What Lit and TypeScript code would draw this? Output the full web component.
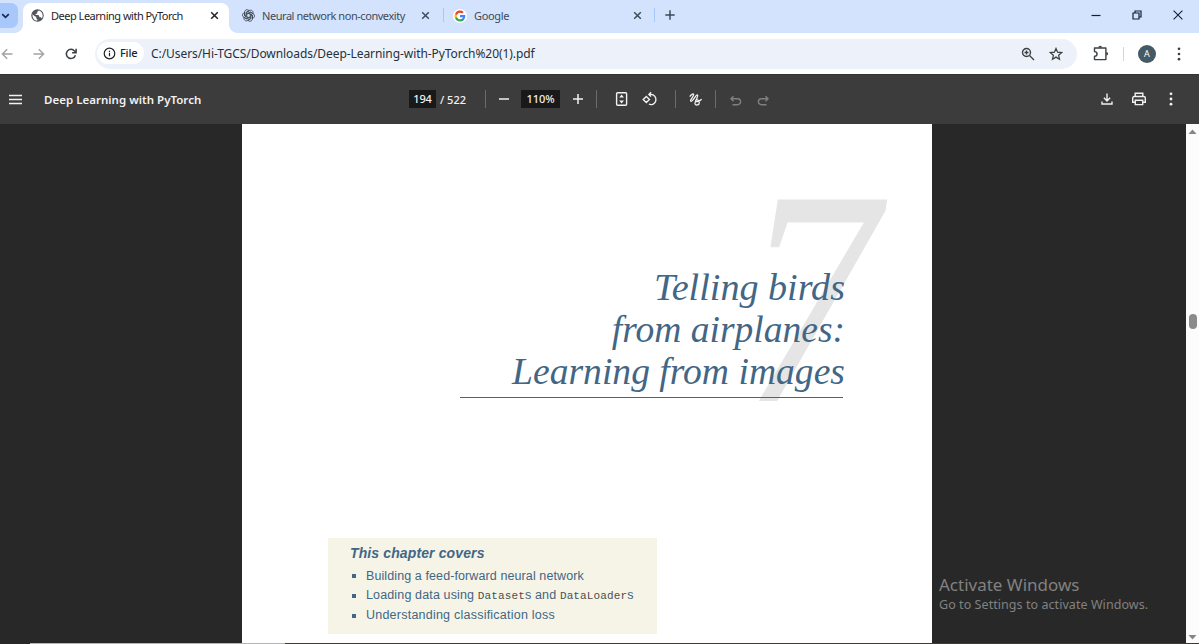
import { LitElement, html, css, svg } from "lit";
import { customElement } from "lit/decorators.js";

const icon = (name: string, size: number, body: unknown, box = 24) =>
  html`<svg class="icon ${name}" width=${size} height=${size} viewBox="0 0 ${box} ${box}">${body}</svg>`;

const close = () => icon("line", 9, svg`<path d="M1.2 1.2l6.6 6.6M7.8 1.2l-6.6 6.6" stroke-width="1.5"/>`, 9);
const dots = (r: number) =>
  icon("solid", 16, svg`<circle cx="8" cy="2.8" r=${r}/><circle cx="8" cy="8" r=${r}/><circle cx="8" cy="13.2" r=${r}/>`, 16);

@customElement("tab-strip")
class TabStrip extends LitElement {
  static styles = css`
    :host { display: flex; height: 33px; background: #d3e3fd; color: #414a58; font: 11px/16px "Noto Sans", sans-serif; }
    .icon { display: block; flex: none; }
    .line { fill: none; stroke: currentColor; }
    .search { width: 18px; height: 25px; margin: 3px 5px 0 0; border-radius: 0 7px 7px 0; background: #a8c7fa; color: #172a4a; display: flex; align-items: center; box-sizing: border-box; }
    .tab { display: flex; flex: none; align-items: center; box-sizing: border-box; height: 25px; margin-top: 3px; white-space: nowrap; }
    .active { width: 206px; height: 30px; padding: 0 10px 5px 8px; background: #fff; border-radius: 8px 8px 0 0; color: #1f2328; position: relative; }
    .active::before, .active::after { content: ""; position: absolute; bottom: 0; width: 8px; height: 8px; }
    .active::before { left: -8px; background: radial-gradient(circle at 0 0, transparent 7.5px, #fff 8px); }
    .active::after { right: -8px; background: radial-gradient(circle at 100% 0, transparent 7.5px, #fff 8px); }
    .name { flex: 1; margin-left: 7px; }
    .t1 { letter-spacing: -0.49px; }
    .t2 { letter-spacing: -0.45px; }
    .t3 { letter-spacing: -0.35px; }
    .second { width: 201px; padding-left: 13px; }
    .third { width: 198px; padding-left: 9px; }
    .disc { width: 14px; height: 14px; border-radius: 50%; background: #fff; display: grid; place-items: center; }
    .bar { flex: none; width: 1px; height: 14px; margin-top: 8px; background: #a8c7fa; }
    .after-second { margin-left: 13px; }
    .after-third { margin-left: 12px; }
    .new { margin: 10px auto 0 10px; }
    .win { display: flex; align-items: center; color: #10203c; height: 30px; margin-right: 16px; gap: 31px; }
  `;
  render() {
    return html`
      <div class="search">${icon("line", 12, svg`<path d="M2.2 4.2L5.5 7.4 8.8 4.2" stroke-width="1.7"/>`, 12)}</div>
      <div class="tab active">
        ${icon("globe", 13, svg`<circle cx="6.5" cy="6.5" r="6.2" fill="#50555b"/><path d="M1.5 5.2L3.7 7.2 5.2 7.7V9.2L6.3 10.3V11.7C3.3 11.6 1.3 9.2 1.5 5.2ZM7.8 1.5L6.1 2.9 6.3 4.5 4.3 4.9 4.9 6.1H7.4L8.7 8.2H10L11 9.4C12.6 6.7 11.5 2.6 7.8 1.5Z" fill="#fff"/>`, 13)}
        <span class="name t1">Deep Learning with PyTorch</span>
        ${close()}
      </div>
      <div class="tab second">
        ${icon("line", 13, svg`${[0, 60, 120, 180, 240, 300].map(
          (a) => svg`<path d="M8.9 12.3V5.5L13.5 2.8C18 .4 22 5 19.9 9.2M8.9 8.9L14.9 5.4L20.6 8.8" transform="rotate(${a} 12 12)" stroke-width="1.65"/>`
        )}`)}
        <span class="name t2">Neural network non-convexity</span>
        ${close()}
      </div>
      <div class="bar after-second"></div>
      <div class="tab third">
        <span class="disc">${icon("g", 12, svg`
          <path fill="#4285F4" d="M22.6 12.2c0-.8-.1-1.5-.2-2.2H12v4.3h5.9a5 5 0 0 1-2.2 3.3v2.8h3.6c2.1-1.9 3.3-4.8 3.3-8.2z"/>
          <path fill="#34A853" d="M12 23c3 0 5.5-1 7.3-2.6l-3.6-2.8a6.6 6.6 0 0 1-9.9-3.5H2.2v2.8A11 11 0 0 0 12 23z"/>
          <path fill="#FBBC05" d="M5.8 14.1a6.6 6.6 0 0 1 0-4.2V7.1H2.2a11 11 0 0 0 0 9.8z"/>
          <path fill="#EA4335" d="M12 5.4c1.6 0 3.1.6 4.2 1.6l3.2-3.1A11 11 0 0 0 2.2 7.1l3.6 2.8A6.6 6.6 0 0 1 12 5.4z"/>`)}</span>
        <span class="name t3">Google</span>
        ${close()}
      </div>
      <div class="bar after-third"></div>
      <div class="new">${icon("line", 10, svg`<path d="M5 .3V9.7M.3 5H9.7" stroke-width="1.5"/>`, 10)}</div>
      <div class="win">
        ${icon("line", 10, svg`<path d="M.5 5.5H9.5" stroke-width="1.2"/>`, 10)}
        ${icon("line", 10, svg`<path d="M1 3H7V9H1ZM3 3V1H9V7H7" stroke-width="1.2"/>`, 10)}
        ${icon("line", 10, svg`<path d="M.6 .6L9.4 9.4M9.4 .6L.6 9.4" stroke-width="1.1"/>`, 10)}
      </div>
    `;
  }
}

@customElement("address-bar")
class AddressBar extends LitElement {
  static styles = css`
    :host { display: flex; align-items: center; height: 41px; box-sizing: border-box; background: #fff; color: #3c4043; font: 12px/18px "Noto Sans", sans-serif; }
    .icon { display: block; flex: none; }
    .line { fill: none; stroke: currentColor; }
    .solid { fill: currentColor; }
    .nav { display: flex; flex: none; gap: 20px; width: 95px; box-sizing: border-box; padding-left: 1px; color: #a0a3a7; }
    .reload { color: #3c4043; }
    .pill { flex: 0 0 982px; height: 30px; border-radius: 15px; background: #edf2fa; display: flex; align-items: center; }
    .chip { width: 47px; height: 22px; margin: -1px 0 0 2px; padding-left: 6px; box-sizing: border-box; background: #fff; border-radius: 11px; display: flex; align-items: center; gap: 4px; font-size: 11px; font-weight: 500; letter-spacing: -0.2px; color: #202124; }
    .url { flex: 1; margin-left: 7px; color: #27303a; letter-spacing: -0.07px; white-space: nowrap; }
    .zoom { margin-right: 14px; }
    .star { margin-right: 14px; }
    .ext { margin-left: 16px; }
    .bar { width: 1px; height: 14px; margin: 0 14px 0 13px; background: #c3d7f8; }
    .avatar { width: 18px; height: 18px; border-radius: 50%; background: #455a64; color: #fff; font-size: 9px; text-align: center; margin-right: 15px; }
  `;
  render() {
    const back = svg`<path d="M11.5 6H1.5M6.2 1.2L1.4 6l4.8 4.8" stroke-width="1.4"/>`;
    return html`
      <div class="nav">
        ${icon("line", 12, back, 12)}
        ${icon("line", 12, svg`<g transform="rotate(180 6 6)">${back}</g>`, 12)}
        <span class="reload">${icon("line", 12, svg`<path d="M10.4 7.2A4.6 4.6 0 1 1 9.6 3.1L11 4.5M11.1 .7V4.7H7.1" stroke-width="1.5"/>`, 12)}</span>
      </div>
      <div class="pill">
        <div class="chip">
          ${icon("line", 13, svg`<circle cx="6.5" cy="6.5" r="5.3" stroke-width="1.2"/><path d="M6.5 5.8V9.3M6.5 3.7V4.9" stroke-width="1.2"/>`, 13)}
          <span>File</span>
        </div>
        <span class="url">C:/Users/Hi-TGCS/Downloads/Deep-Learning-with-PyTorch%20(1).pdf</span>
        <span class="zoom">${icon("line", 14, svg`<circle cx="5.5" cy="5.5" r="4" stroke-width="1.4"/><path d="M8.5 8.5L13 13M3.5 5.5H7.5M5.5 3.5V7.5" stroke-width="1.4"/>`, 14)}</span>
        <span class="star">${icon("line", 14, svg`<path d="M7 1.5L8.6 5.2 12.6 5.6 9.6 8.3 10.5 12.2 7 10.1 3.5 12.2 4.4 8.3 1.4 5.6 5.4 5.2Z" stroke-width="1.25"/>`, 14)}</span>
      </div>
      <span class="ext">${icon("line", 17, svg`<path d="M1.5 3H12.9V14.6H1.5V11.2C4.9 11 4.9 6.8 1.5 6.6Z" stroke-width="1.4" stroke-linejoin="round"/><path d="M5.4 2.6A1.8 1.8 0 0 1 9 2.6ZM13.3 7A1.8 1.8 0 0 1 13.3 10.6Z" fill="currentColor" stroke="none"/>`, 17)}</span>
      <div class="bar"></div>
      <div class="avatar">A</div>
      ${dots(1.35)}
    `;
  }
}

@customElement("pdf-toolbar")
class PdfToolbar extends LitElement {
  static styles = css`
    :host { display: grid; grid-template-columns: 409px 1fr 98px; align-items: center; height: 50px; background: #3c3c3c; color: #f1f1f1; font: 600 11.5px/18px "Noto Sans", sans-serif; box-shadow: inset 0 1px #333; }
    .icon { display: block; flex: none; }
    .line { fill: none; stroke: currentColor; }
    .solid { fill: currentColor; }
    .left, .mid, .right { display: flex; align-items: center; }
    .left { padding-left: 9px; gap: 22px; }
    .title { letter-spacing: 0.02px; padding-top: 2px; }
    .field { height: 18px; background: #191919; text-align: center; font-weight: 500; font-size: 11px; letter-spacing: -0.1px; }
    .page { width: 27px; }
    .total { width: 49px; font-weight: 500; font-size: 11px; padding: 1px 0 0 4px; box-sizing: border-box; white-space: nowrap; }
    .zoom { width: 39px; }
    .minus { margin: 0 12px 0 13px; }
    .plus { margin: 0 13px; }
    .sep { width: 1px; height: 18px; background: #6b6b6b; }
    .fit { margin: 0 13px 0 18px; }
    .after-rotate { margin: 0 13px 0 17px; }
    .after-pen { margin: 0 13px; }
    .off { color: #808080; padding-top: 2px; }
    .redo { margin-left: 15px; }
    .print { margin-left: 2px; }
    .right { gap: 16px; }
  `;
  render() {
    const undo = svg`<path d="M4.5 2.2L2 4.7L4.5 7.2M2.2 4.7H8.6A2.8 2.8 0 0 1 8.6 10.7H3.5" stroke-width="1.4"/>`;
    return html`
      <div class="left">
        ${icon("line", 13, svg`<path d="M0 2.5H13M0 6.5H13M0 10.5H13" stroke-width="1.4"/>`, 13)}
        <span class="title">Deep Learning with PyTorch</span>
      </div>
      <div class="mid">
        <div class="field page">194</div>
        <div class="total">/ 522</div>
        <div class="sep"></div>
        <span class="minus">${icon("line", 10, svg`<path d="M0 5H10" stroke-width="1.5"/>`, 10)}</span>
        <div class="field zoom">110%</div>
        <span class="plus">${icon("line", 10, svg`<path d="M0 5H10M5 0V10" stroke-width="1.5"/>`, 10)}</span>
        <div class="sep"></div>
        <span class="fit">${icon("line", 14, svg`<rect x="1.6" y=".7" width="10" height="12.6" rx="1" stroke-width="1.4"/><path d="M6.6 2.6L9 5.4H4.2ZM6.6 11.4L9 8.6H4.2Z" fill="currentColor" stroke="none"/>`, 14)}</span>
        ${icon("line", 16, svg`<path d="M4.3 5.4L7.4 8.5L4.3 11.6L1.2 8.5ZM9.1 1.2L6.9 3.4L9.1 5.6M7.2 3.4H9A5.1 5.1 0 1 1 6.9 13.2" stroke-width="1.4"/>`, 16)}
        <div class="sep after-rotate"></div>
        ${icon("line", 13, svg`<path d="M.8 3.6C2 1.6 4.2 .3 4.6 1.4C5.2 3 .4 7.2 1.9 8.2C3.6 9.2 6.9 1.2 8.5 2C10 3 5.2 8.6 6.1 11C6.8 12.6 10.3 12.2 10.3 9.4C10.3 6.6 6.6 6.2 6.6 8C6.7 9.6 10.5 8.2 12.6 6.2" stroke-width="1.3"/>`, 13)}
        <div class="sep after-pen"></div>
        <span class="off">${icon("line", 13, undo, 13)}</span>
        <span class="off redo">${icon("line", 13, svg`<g transform="matrix(-1 0 0 1 13 0)">${undo}</g>`, 13)}</span>
      </div>
      <div class="right">
        ${icon("line", 12, svg`<path d="M6 .5V7.6M2.9 4.8L6 7.9L9.1 4.8M1 8.6V11H11V8.6" stroke-width="1.4"/>`, 12)}
        <span class="print">${icon("line", 16, svg`<path d="M4.2 5.2V2.3H11.8V5.2M4 11.3H1.7V7.1A1.6 1.6 0 0 1 3.3 5.5H12.7A1.6 1.6 0 0 1 14.3 7.1V11.3H12M4.3 9.3H11.7V13.6H4.3Z" stroke-width="1.4"/>`, 16)}</span>
        ${dots(1.4)}
      </div>
    `;
  }
}

@customElement("pdf-view")
class PdfView extends LitElement {
  static styles = css`
    :host { display: grid; grid-template-columns: 242px 690px 1fr 13px; height: 520px; background: #282828; position: relative; overflow: hidden; color: #426685; }
    .page { grid-column: 2; background: #fff; position: relative; display: flex; flex-direction: column; }
    .numeral { position: absolute; right: 42px; top: 14px; font: italic 314px/314px "Liberation Serif", serif; color: #e5e5e5; transform: translateX(-1px) scale(0.86, 0.98); transform-origin: 50% 263px; }
    h1 { position: relative; margin: 142px 89px 0 218px; height: 131px; border-bottom: 1px solid #426685; font: italic 400 38.5px/42px "Liberation Serif", serif; text-align: right; white-space: nowrap; }
    h1 span { display: block; transform-origin: 100% 50%; }
    .l1 { transform: translateX(2px) scaleX(0.99); }
    .l2 { transform: translateX(2px) scaleX(0.975); }
    .l3 { transform: translateX(2px) scaleX(0.977); }
    .covers { margin: 140px 0 0 86px; width: 329px; height: 96px; box-sizing: border-box; padding: 6px 0 0 22px; background: #f6f4e7; font: 12.5px/19.5px "Liberation Sans", sans-serif; }
    h2 { margin: 0 0 4.5px; font: italic 700 14px/18px "Liberation Sans", sans-serif; letter-spacing: 0.12px; }
    ul { margin: 0; padding: 0; list-style: none; }
    li { display: flex; align-items: center; white-space: pre; }
    li::before { content: ""; width: 4px; height: 4px; margin: 0 10px 0 2px; background: #426685; }
    .b1 { letter-spacing: 0.1px; }
    .b2 { letter-spacing: 0.14px; }
    .b3 { letter-spacing: 0.23px; }
    code { font: 11px/19px "Liberation Mono", monospace; color: #4d4d4d; }
    .activate { position: absolute; left: 939px; top: 448px; font: 12.5px/18px "Noto Sans", sans-serif; color: #818181; white-space: nowrap; letter-spacing: 0.06px; }
    .activate strong { display: block; font-weight: 400; font-size: 17px; line-height: 25px; letter-spacing: 0; }
    .activate span { display: block; margin-top: -1px; }
    .scroll { grid-column: 4; background: #fcfcfc; display: flex; flex-direction: column; align-items: center; fill: #868686; padding: 5px 0 4px; box-sizing: border-box; }
    .thumb { width: 8px; height: 15px; border-radius: 4px; background: #8b8b8b; margin: 180px 0 auto; }
    .edge { position: absolute; bottom: 0; left: 0; width: 1199px; height: 1px; background: linear-gradient(90deg, #282828 30px, #b5b5b5 30px 285px, #3b3a35 285px); }
  `;
  render() {
    return html`
      <article class="page">
        <div class="numeral">7</div>
        <h1><span class="l1">Telling birds</span><span class="l2">from airplanes:</span><span class="l3">Learning from images</span></h1>
        <section class="covers">
          <h2>This chapter covers</h2>
          <ul>
            <li><span class="b1">Building a feed-forward neural network</span></li>
            <li><span class="b2">Loading data using <code>Dataset</code>s and <code>DataLoader</code>s</span></li>
            <li><span class="b3">Understanding classification loss</span></li>
          </ul>
        </section>
      </article>
      <div class="scroll">
        <svg width="9" height="5"><path d="M.5 5L4.5 .5L8.5 5Z"/></svg>
        <div class="thumb"></div>
        <svg width="9" height="5"><path d="M.5 0L4.5 4.5L8.5 0Z"/></svg>
      </div>
      <div class="activate"><strong>Activate Windows</strong><span>Go to Settings to activate Windows.</span></div>
      <div class="edge"></div>
    `;
  }
}

@customElement("app-root")
class AppRoot extends LitElement {
  static styles = css`
    :host { display: block; width: 1199px; height: 644px; overflow: hidden; background: #282828; }
  `;
  render() {
    return html`<tab-strip></tab-strip><address-bar></address-bar><pdf-toolbar></pdf-toolbar><pdf-view></pdf-view>`;
  }
}
